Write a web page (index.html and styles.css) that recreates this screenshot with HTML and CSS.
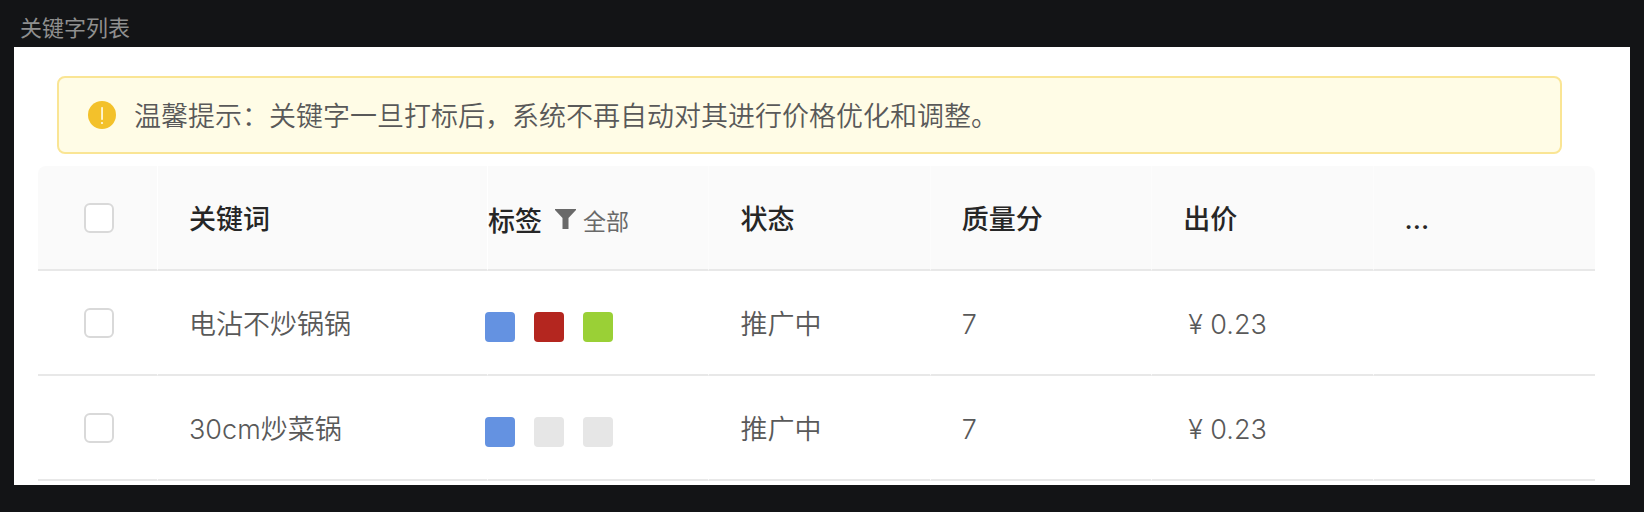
FILE: index.html
```html
<!DOCTYPE html>
<html lang="zh-CN">
<head>
<meta charset="utf-8">
<meta name="viewport" content="width=device-width, initial-scale=1">
<title>关键字列表</title>
<link rel="stylesheet" href="styles.css">
</head>
<body>
<main class="page">
  <h1 class="page-title">关键字列表</h1>
  <section class="panel">
    <div class="alert" role="note">
      <svg class="alert-icon" viewBox="0 0 28 28" aria-hidden="true">
        <circle cx="14" cy="14" r="14" fill="#f3c12b"/>
        <rect x="13.2" y="6" width="1.7" height="13" rx=".8" fill="#fffbe6"/>
        <circle cx="14" cy="22" r="1.1" fill="#fffbe6"/>
      </svg>
      <p class="alert-text">温馨提示：关键字一旦打标后，系统不再自动对其进行价格优化和调整。</p>
    </div>
    <table class="table">
      <colgroup>
        <col class="col-check"><col class="col-word"><col><col><col><col><col>
      </colgroup>
      <thead>
        <tr>
          <th class="cell-check"><input class="check" type="checkbox" aria-label="全选"></th>
          <th>关键词</th>
          <th class="cell-tag">
            <div class="tag-head">
              <span>标签</span>
              <button class="filter" type="button">
                <svg class="filter-icon" viewBox="0 0 21 20" aria-hidden="true"><path d="M0 0H21V1L13.5 9V20H7.5V9L0 1Z" fill="#696969"/></svg>
                <span class="filter-label">全部</span>
              </button>
            </div>
          </th>
          <th>状态</th>
          <th>质量分</th>
          <th>出价</th>
          <th>...</th>
        </tr>
      </thead>
      <tbody>
        <tr>
          <td class="cell-check"><input class="check" type="checkbox" aria-label="电沾不炒锅锅"></td>
          <td>电沾不炒锅锅</td>
          <td class="cell-tag"><div class="tags"><span class="tag blue"></span><span class="tag red"></span><span class="tag green"></span></div></td>
          <td>推广中</td>
          <td>7</td>
          <td class="cell-price">¥ 0.23</td>
          <td></td>
        </tr>
        <tr>
          <td class="cell-check"><input class="check" type="checkbox" aria-label="30cm炒菜锅"></td>
          <td>30cm炒菜锅</td>
          <td class="cell-tag"><div class="tags"><span class="tag blue"></span><span class="tag"></span><span class="tag"></span></div></td>
          <td>推广中</td>
          <td>7</td>
          <td class="cell-price">¥ 0.23</td>
          <td></td>
        </tr>
      </tbody>
    </table>
  </section>
</main>
</body>
</html>
```

FILE: styles.css
```css
* {
  box-sizing: border-box;
}

body {
  margin: 0;
  background: #131416;
  color: #595959;
  font-family: Inter, "Noto Sans CJK SC", sans-serif;
  font-size: 27px;
  font-weight: 350;
  line-height: 40px;
}

.page {
  padding: 12px 14px 27px;
}

.page-title {
  margin: 0;
  padding: 0 6px 3px;
  color: #8f8f8f;
  font-size: 22px;
  font-weight: 400;
  line-height: 32px;
}

.panel {
  padding: 29px 35px 4px 24px;
  background: #fff;
}

.alert {
  display: flex;
  align-items: center;
  gap: 18px;
  margin: 0 33px 12px 19px;
  padding: 17px 29px;
  border: 2px solid #fae594;
  border-radius: 8px;
  background: #fffce6;
}

.alert-icon {
  flex: none;
  width: 28px;
  height: 28px;
}

.alert-text {
  margin: 0;
  padding-top: 4px;
  line-height: 36px;
}

.table {
  width: 100%;
  table-layout: fixed;
  border-collapse: separate;
  border-spacing: 0;
}

.col-check {
  width: 120px;
}

.col-word {
  width: 330px;
}

.table th,
.table td {
  height: 105px;
  padding: 4px 31px 0;
  border-right: 1px solid #fff;
  border-bottom: 2px solid #e8e8e8;
  text-align: left;
  vertical-align: middle;
}

.table th {
  background: #fafafa;
  color: #262626;
  font-weight: 500;
}

.table th:nth-child(n + 3) {
  border-right-color: #fcfcfc;
}

.table th:first-child {
  border-top-left-radius: 8px;
}

.table th:last-child {
  border-top-right-radius: 8px;
}

.table th:last-child,
.table td:last-child {
  border-right: 0;
}

.table .cell-check {
  padding: 0 0 0 46px;
}

.table .cell-tag {
  padding: 8px 0 0;
}

.table .cell-price {
  padding-left: 36px;
}

.check {
  display: block;
  width: 30px;
  height: 30px;
  margin: 0;
  appearance: none;
  border: 2px solid #d9d9d9;
  border-radius: 6px;
  background: #fff;
}

.check:checked {
  border-color: #6492e1;
  background: #6492e1;
}

.tag-head {
  display: flex;
  align-items: center;
  gap: 13px;
}

.filter {
  display: flex;
  align-items: flex-start;
  gap: 7px;
  padding: 0;
  border: 0;
  background: none;
  color: #696969;
  font: inherit;
  font-size: 23px;
  font-weight: 400;
  cursor: pointer;
}

.filter-icon {
  width: 21px;
  height: 20px;
  margin-top: 7px;
}

.tags {
  display: flex;
  gap: 19px;
  margin-left: -3px;
}

.tag {
  width: 30px;
  height: 30px;
  border-radius: 4px;
  background: #e6e6e6;
}

.blue {
  background: #6492e1;
}

.red {
  background: #b4261f;
}

.green {
  background: #9ad036;
}
```
